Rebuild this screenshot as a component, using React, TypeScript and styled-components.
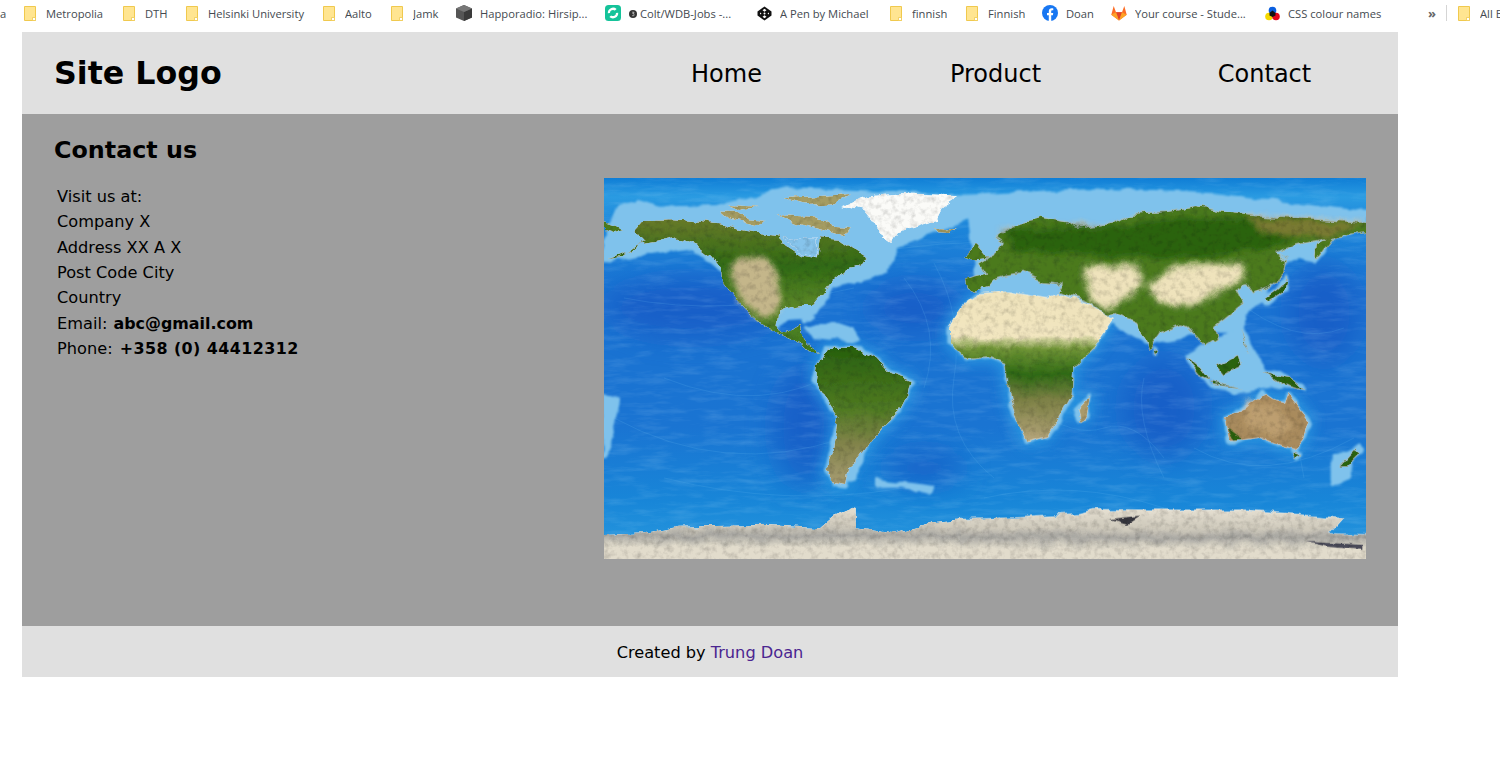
import React from "react";
import styled, { createGlobalStyle } from "styled-components";

const Global = createGlobalStyle`
  html, body { margin: 0; padding: 0; background: #fff; overflow: hidden; }
  body { font-family: "DejaVu Sans", Verdana, sans-serif; color: #000; }
`;

const BookmarkBar = styled.nav`
  height: 32px; display: flex; align-items: center; background: #fff; overflow: hidden;
  font-family: "Open Sans", "Noto Sans", sans-serif; font-size: 11.2px; color: #444a50; white-space: nowrap;
  padding-bottom: 6px; box-sizing: border-box;
`;
const Bookmark = styled.div<{ $left: number }>`
  display: flex; align-items: center; flex: none; margin-left: ${(p) => p.$left}px;
`;
const IconSlot = styled.span<{ $gap: number }>`
  display: flex; align-items: center; justify-content: center; flex: none; margin-right: ${(p) => p.$gap}px;
`;
const BookmarkLabel = styled.span<{ $w: number }>`
  display: block; flex: none; width: ${(p) => p.$w}px; overflow: hidden;
`;
const Chevrons = styled.span`
  flex: none; width: 9px; margin-left: 45px; font-size: 13px; font-weight: 700; color: #666; line-height: 1;
`;
const Separator = styled.span`
  flex: none; width: 1px; height: 16px; margin-left: 9px; background: #d5d5d5;
`;

const Page = styled.div`
  width: 1376px; margin-left: 22px;
`;
const Header = styled.header`
  height: 82px; background: #e0e0e0; display: grid; grid-template-columns: 538px repeat(3, 269px); align-items: center;
  padding: 2px 0 0 32px; box-sizing: border-box;
`;
const Logo = styled.div`
  font-size: 31.7px; font-weight: 700; margin-bottom: 2px;
`;
const NavLink = styled.a`
  font-size: 24px; text-align: center; color: #000;
`;
const Main = styled.main`
  height: 512px; background: #9e9e9e; box-sizing: border-box; padding: 19px 32px 0;
`;
const Heading = styled.h1`
  margin: 0; font-size: 23.8px; font-weight: 700; line-height: 34px;
`;
const Columns = styled.div`
  display: grid; grid-template-columns: 550px 762px; margin-top: 11px;
`;
const Address = styled.address`
  font-style: normal; font-size: 16.2px; line-height: 25.33px; padding: 6px 0 0 3px;
`;
const Value = styled.b<{ $spacing: number; $left: number }>`
  font-size: 15.9px; letter-spacing: ${(p) => p.$spacing}px; margin-left: ${(p) => p.$left}px;
`;
const MapSvg = styled.svg`
  display: block; width: 762px; height: 381px;
`;
const Footer = styled.footer`
  height: 51px; background: #e0e0e0; display: flex; align-items: center; justify-content: center; font-size: 16.2px;
  padding-top: 2px; box-sizing: border-box;
`;
const FooterLink = styled.a`
  color: #4b2590; margin-left: 5px;
`;

const Folder = () => (
  <svg width="12" height="15" viewBox="0 0 12 15">
    <path d="M.5.5h11v14H.5z" fill="#ffe591" stroke="#f0c94e" />
    <path d="M8.500 14.500v-3h3v3z" fill="#fff" stroke="#f0c94e" strokeWidth="0.8" />
  </svg>
);
const Cube = () => (
  <svg width="16" height="16" viewBox="0 0 16 16">
    <path d="M8 0l8 3.500v9L8 16 0 12.500v-9z" fill="#555" />
    <path d="M8 7l8-3.500v9L8 16z" fill="#3a3a3a" />
    <path d="M8 0l8 3.500L8 7 0 3.500z" fill="#777" />
  </svg>
);
const Swirl = () => (
  <svg width="16" height="16" viewBox="0 0 16 16">
    <rect width="16" height="16" rx="3.500" fill="#15c39a" />
    <path d="M2.800 8.300A5.300 5.300 0 0 1 11.600 4L9.900 5.600A3 3 0 0 0 5 8z" fill="#fff" />
    <path d="M13.200 7.700A5.300 5.300 0 0 1 4.400 12L6.100 10.400A3 3 0 0 0 11 8z" fill="#fff" />
  </svg>
);
const Pen = () => (
  <svg width="15" height="15" viewBox="0 0 15 15">
    <path d="M7.500.5l7 5v4l-7 5-7-5v-4z" fill="#111" />
    <path d="M7.500 2.800l2 1.400-2 1.500-2-1.500zM7.500 9.300l2 1.500-2 1.400-2-1.400zM3 6.500l1.500 1-1.500 1zM12 6.500l-1.500 1 1.500 1z" fill="#fff" />
    <circle cx="7.500" cy="7.500" r="1" fill="#fff" />
  </svg>
);
const Dot = () => (
  <svg width="8" height="8" viewBox="0 0 8 8">
    <circle cx="4" cy="4" r="4" fill="#333" />
    <path d="M3 2.200h2v.8H3.800v.7h1.200v2H3" fill="none" stroke="#ddd" strokeWidth="0.600" />
  </svg>
);
const Facebook = () => (
  <svg width="16" height="16" viewBox="0 0 16 16">
    <circle cx="8" cy="8" r="8" fill="#1877f2" />
    <path d="M6.800 16V10.300H5V8h1.800V6.300C6.800 4.400 8 3.300 9.700 3.300c.8 0 1.600.15 1.600.15v1.900h-.9c-.9 0-1.200.6-1.200 1.100V8h2l-.3 2.300H9.200V16z" fill="#fff" />
  </svg>
);
const GitLab = () => (
  <svg width="16" height="16" viewBox="0 0 16 16">
    <path d="M8 15.500L.3 9.700 2.700 1l2.300 6.300h6L13.300 1l2.400 8.700z" fill="#fc6d26" />
    <path d="M8 15.500L5 7.300h6z" fill="#e24329" />
    <path d="M.3 9.700L8 15.500 5 7.300z" fill="#fca326" />
    <path d="M15.700 9.700L8 15.500l3-8.200z" fill="#fca326" />
  </svg>
);
const Colours = () => (
  <svg width="15" height="15" viewBox="0 0 15 15">
    <circle cx="7.500" cy="4.500" r="3.800" fill="#0a5fe0" />
    <circle cx="4" cy="10.500" r="3.800" fill="#f5d800" />
    <circle cx="11" cy="10.500" r="3.800" fill="#e4061c" />
    <path d="M4.500 6.800l3-2.300 3 2.500 0 2.500L7.500 11l-3-1.500z" fill="#111" />
  </svg>
);

type Item = { left: number; icon: React.ReactNode; gap: number; label: React.ReactNode; w: number };
const bookmarks: Item[] = [
  { left: 18, icon: <Folder />, gap: 10, label: "Metropolia", w: 58 },
  { left: 19, icon: <Folder />, gap: 10, label: "DTH", w: 23 },
  { left: 18, icon: <Folder />, gap: 10, label: "Helsinki University", w: 97 },
  { left: 18, icon: <Folder />, gap: 10, label: "Aalto", w: 28 },
  { left: 18, icon: <Folder />, gap: 10, label: "Jamk", w: 27 },
  { left: 16, icon: <Cube />, gap: 8, label: "Happoradio: Hirsip...", w: 109 },
  { left: 16, icon: <Swirl />, gap: 8, label: <><Dot /> Colt/WDB-Jobs -...</>, w: 112 },
  { left: 16, icon: <Pen />, gap: 8, label: "A Pen by Michael", w: 91 },
  { left: 19, icon: <Folder />, gap: 10, label: "finnish", w: 35 },
  { left: 19, icon: <Folder />, gap: 10, label: "Finnish", w: 37 },
  { left: 17, icon: <Facebook />, gap: 8, label: "Doan", w: 28 },
  { left: 17, icon: <GitLab />, gap: 8, label: "Your course - Stude...", w: 112 },
  { left: 18, icon: <Colours />, gap: 8, label: "CSS colour names", w: 95 },
];

const ice = "#fbfbf8";
const green = "#4b7a1f";
const dark = "#2c6310";
const tan = "#a99a6a";
const sand = "#efe3bc";

const northAmerica = "M100 185L130 150L220 148L300 155L370 165L420 180L480 190L540 195L555 225L600 255L650 265L660 205L720 210L770 245L800 265L770 285L745 290L700 330L670 370L640 405L610 405L560 415L535 425L530 465L550 490L575 480L600 465L605 490L625 520L660 545L630 540L590 515L545 495L490 465L440 420L400 375L370 335L365 300L340 265L290 225L230 200L170 215L110 225L60 262L20 268L100 240L130 215Z";
const southAmerica = "M680 530L760 530L830 565L870 610L935 630L925 670L900 720L850 770L820 800L780 860L745 890L735 945L700 940L680 900L700 830L715 740L680 690L645 630L650 590Z";
const minorA = [
  "M12 160L70 180L40 190L12 180Z",
  "M1095 325L1180 320L1165 355L1120 365L1100 355Z",
  "M1090 260L1130 225L1165 265L1120 270Z",
];
const arctic = [
  "M360 125L410 125L440 145L500 150L470 165L390 150Z",
  "M530 135L640 140L700 170L750 175L720 195L650 175L590 160Z",
  "M385 105L480 110L420 120Z",
  "M550 85L750 72L700 100L620 105Z",
  "M1005 178L1070 178L1045 192L1015 190Z",
];
const greenland = "M730 105L800 80L900 70L1030 75L1075 80L1030 110L1010 150L950 170L890 190L875 215L840 190L815 150L790 120Z";
const antarcticaW = "M12 1095L130 1090L240 1070L500 1065L660 1075L700 1040L770 1010L770 1075L880 1090L1000 1060L1200 1040L1200 1300L-40 1300L-40 1100Z";

const eurasia = "M-40 325L20 310L0 280L50 250L70 220L50 205L100 165L180 145L270 160L290 175L400 160L450 130L560 125L650 110L730 125L850 140L1030 150L1200 160L1200 185L1060 205L1020 260L1005 265L1010 220L1040 205L950 225L890 250L920 270L915 310L870 350L820 370L800 340L770 360L790 400L740 440L700 470L710 510L680 530L640 490L620 470L600 465L540 490L505 540L470 460L400 430L380 440L330 400L240 365L250 340L190 335L130 310L70 320L20 335L0 350L-30 360Z";
const africa = "M-90 470L-50 410L0 370L80 365L200 385L235 370L300 420L395 450L340 530L280 590L275 680L235 750L200 800L140 815L110 750L90 690L75 580L30 560L-40 565L-90 520Z";
const australia = "M735 745L790 720L850 670L880 690L915 700L925 670L985 750L970 810L945 840L900 825L840 800L770 810L745 810Z";
const islands = [
  "M330 680L320 740L300 755L292 720Z",
  "M620 560L660 590L690 630L665 620Z",
  "M710 590L770 555L780 590L730 615Z",
  "M850 605L930 620L970 660L910 640Z",
  "M690 635L790 655L700 645Z",
  "M850 390L900 350L920 320L915 360L860 400Z",
  "M780 480L800 540L810 550L790 520Z",
  "M1130 830L1145 845L1100 890L1075 890Z",
  "M520 535L532 545L525 558Z",
  "M935 845L960 850L945 870Z",
];
const antarcticaE = "M-60 1045L100 1040L300 1030L340 1018L600 1020L800 1020L1090 1045L1050 1090L1200 1095L1200 1300L-60 1300Z";
const shelvesA = [
  "M350 110L560 60L1120 80L1110 140L1040 170L890 225L860 300L820 320L700 350L650 420L610 450L640 440L560 445L530 470L480 440L360 300L280 230L130 250L12 270L12 220L60 110L110 95L180 115Z",
  "M740 800L800 820L770 920L720 935Z",
  "M12 680L55 690L30 800L12 860Z",
  "M620 470L760 470L770 510L640 500Z",
];
const shelvesB = [
  "M-40 80L320 60L700 75L1158 125L1158 165L1060 205L1010 270L960 260L900 290L860 370L800 430L780 480L700 480L500 520L380 440L200 380L0 370Z",
  "M620 560L780 470L850 600L940 640L760 670Z",
  "M1060 850L1130 850L1100 930L1060 940Z",
];
const ridges = [
  "M30 60Q150 90 300 70T560 100", "M20 120Q120 140 250 110", "M60 200Q160 240 240 190", "M10 240Q120 300 240 260",
  "M60 300Q180 330 300 310", "M330 85Q360 140 350 200T390 300", "M300 100Q340 150 320 210",
  "M430 230Q470 260 500 250T560 280", "M540 200Q530 240 560 300", "M630 120Q690 170 740 150", "M590 270Q660 310 750 260",
  "M640 200Q690 230 700 300", "M380 320Q470 300 560 330",
];

const A = "translate(-4 -8) scale(0.3333)";
const B = "translate(376 -8) scale(0.3333)";

const WorldMap = () => (
  <MapSvg viewBox="0 0 762 381" role="img" aria-label="World map">
    <defs>
      <linearGradient id="ocean" x1="0" y1="0" x2="0" y2="1">
        <stop offset="0" stopColor="#0f7ed6" />
        <stop offset="0.05" stopColor="#2a9be2" />
        <stop offset="0.12" stopColor="#1c86da" />
        <stop offset="0.3" stopColor="#1a72d2" />
        <stop offset="0.65" stopColor="#1a74d2" />
        <stop offset="0.85" stopColor="#1886d8" />
        <stop offset="1" stopColor="#2a9ade" />
      </linearGradient>
      <linearGradient id="southAm" x1="0" y1="0" x2="0" y2="1">
        <stop offset="0" stopColor="#27600e" />
        <stop offset="0.45" stopColor="#4f7a22" />
        <stop offset="0.7" stopColor="#81834a" />
        <stop offset="1" stopColor="#a79c72" />
      </linearGradient>
      <linearGradient id="northAm" x1="0" y1="0" x2="0" y2="1">
        <stop offset="0" stopColor="#687a2a" />
        <stop offset="0.35" stopColor="#2f6a12" />
        <stop offset="0.65" stopColor="#5a8628" />
        <stop offset="1" stopColor="#3f7a1c" />
      </linearGradient>
      <linearGradient id="africaFill" x1="0" y1="0" x2="0" y2="1">
        <stop offset="0" stopColor="#f0e4bc" />
        <stop offset="0.3" stopColor="#f2e6c0" />
        <stop offset="0.38" stopColor="#6f9436" />
        <stop offset="0.55" stopColor="#2f6a14" />
        <stop offset="0.72" stopColor="#7b8044" />
        <stop offset="1" stopColor="#b7a67c" />
      </linearGradient>
      <linearGradient id="ant" x1="0" y1="0" x2="0" y2="1">
        <stop offset="0" stopColor="#e6e0d2" />
        <stop offset="0.2" stopColor="#cfcabc" />
        <stop offset="0.3" stopColor="#a9a8a3" />
        <stop offset="0.42" stopColor="#e2dccc" />
        <stop offset="1" stopColor="#e2dccc" />
      </linearGradient>
      <filter id="land" x="-5%" y="-5%" width="110%" height="110%">
        <feTurbulence type="fractalNoise" baseFrequency="0.06" numOctaves="4" seed="4" result="warp" />
        <feDisplacementMap in="SourceGraphic" in2="warp" scale="9" xChannelSelector="R" yChannelSelector="G" result="moved" />
        <feTurbulence type="fractalNoise" baseFrequency="0.16" numOctaves="3" seed="12" />
        <feColorMatrix values="0.700 0 0 0 0.600  0.700 0 0 0 0.600  0.700 0 0 0 0.600  0 0 0 0 1" result="mottle" />
        <feComposite in="mottle" in2="moved" operator="in" result="clipped" />
        <feBlend in="moved" in2="clipped" mode="multiply" />
      </filter>
      <filter id="shelf" x="-5%" y="-5%" width="110%" height="110%">
        <feTurbulence type="fractalNoise" baseFrequency="0.05" numOctaves="3" seed="7" result="warp" />
        <feDisplacementMap in="SourceGraphic" in2="warp" scale="9" xChannelSelector="R" yChannelSelector="G" />
        <feGaussianBlur stdDeviation="1.200" />
      </filter>
      <filter id="wide" x="-10%" y="-10%" width="120%" height="120%">
        <feGaussianBlur stdDeviation="7" />
      </filter>
      <filter id="soft" x="-10%" y="-10%" width="120%" height="120%">
        <feGaussianBlur stdDeviation="14" />
      </filter>
      <filter id="patch" x="-30%" y="-30%" width="160%" height="160%">
        <feGaussianBlur stdDeviation="9" />
      </filter>
      <filter id="grain" x="0" y="0" width="100%" height="100%">
        <feTurbulence type="fractalNoise" baseFrequency="0.03 0.16" numOctaves="4" seed="9" />
        <feColorMatrix values="0 0 0 0 0.7  0 0 0 0 0.9  0 0 0 0 1  1.800 0 0 0 -0.800" />
      </filter>
    </defs>

    <rect width="762" height="381" fill="url(#ocean)" />
    <g fill="#1650c0" opacity="0.55" filter="url(#soft)">
      <ellipse cx="90" cy="130" rx="90" ry="30" />
      <ellipse cx="200" cy="250" rx="30" ry="60" />
      <ellipse cx="310" cy="130" rx="45" ry="25" />
      <ellipse cx="320" cy="290" rx="40" ry="18" />
      <ellipse cx="720" cy="135" rx="35" ry="50" />
      <ellipse cx="560" cy="230" rx="40" ry="50" />
    </g>
    <rect width="762" height="381" filter="url(#grain)" opacity="0.16" />
    <g fill="none" stroke="#6cbdf0" strokeWidth="0.8" opacity="0.22">
      {ridges.map((d) => <path key={d} d={d} />)}
    </g>

    <g filter="url(#wide)" fill="#2fa0e4" stroke="#2fa0e4" strokeWidth="30" strokeLinejoin="round" opacity="0.8">
      <path transform={A} d={southAmerica} />
      <g transform={B}>
        <path d={africa} />
        <path d={australia} />
        <path d={islands[0]} />
      </g>
    </g>
    <g filter="url(#shelf)">
      <g fill="#7fc2ec" stroke="#7fc2ec" strokeLinejoin="round">
        <g transform={A} strokeWidth="10">
          <path d={southAmerica} />
          {shelvesA.map((d) => <path key={d} d={d} />)}
          <path d="M830 932L1000 952L985 970L900 945L830 945Z" />
        </g>
        <g transform={B} strokeWidth="10">
          {shelvesB.map((d) => <path key={d} d={d} />)}
          <path d={africa} />
          <path d={australia} />
          {islands.map((d) => <path key={d} d={d} />)}
        </g>
      </g>
    </g>
    <g filter="url(#land)">
      <g transform={A}>
        <path d={northAmerica} fill="url(#northAm)" />
        <path d={southAmerica} fill="url(#southAm)" />
        {minorA.map((d) => <path key={d} d={d} fill={green} />)}
        {arctic.map((d) => <path key={d} d={d} fill="#a59c62" />)}
        <path d="M555 205L650 205L650 262L600 250Z" fill="#86c4ec" />
        <path d="M385 290L430 255L515 275L535 340L535 410L510 445L480 440L420 385Z" fill="#c4b68a" filter="url(#patch)" />
        <path d={greenland} fill={ice} />
        <path d={antarcticaW} fill="url(#ant)" />
      </g>
      <g transform={B}>
        <path d={eurasia} fill={green} />
        <path d="M60 180L270 170L400 170L600 140L1000 160L900 230L700 260L400 260L100 240Z" fill={dark} filter="url(#patch)" />
        <path d="M800 140L1160 160L1050 200L850 190Z" fill="#7a7a32" filter="url(#patch)" />
        <path d={africa} fill="url(#africaFill)" />
        <path d="M240 370L330 405L385 445L300 510L240 430Z" fill={sand} />
        <path d="M310 290L470 280L490 350L380 420L330 390Z" fill={sand} filter="url(#patch)" />
        <path d="M500 350L590 285L780 280L800 320L640 410L540 400Z" fill={sand} filter="url(#patch)" />
        <path d={australia} fill="#a98b5d" />
        <path d="M800 700L880 710L950 770L900 800L800 770Z" fill="#bd9f70" filter="url(#patch)" />
        <path d="M740 770L760 810L790 808Z" fill={dark} />
        {islands.map((d, i) => <path key={d} d={d} fill={i === 0 ? tan : dark} />)}
        <path d={antarcticaE} fill="url(#ant)" />
        <path d="M390 1050L480 1040L440 1065Z" fill="#34343c" />
        <path d="M980 1115L1150 1125L1150 1140L1040 1130Z" fill="#4a4a58" />
      </g>
    </g>
  </MapSvg>
);

export default function App() {
  return (
    <>
      <Global />
      <BookmarkBar>
        <BookmarkLabel $w={6}>a</BookmarkLabel>
        {bookmarks.map((b, i) => (
          <Bookmark key={i} $left={b.left}>
            <IconSlot $gap={b.gap}>{b.icon}</IconSlot>
            <BookmarkLabel $w={b.w}>{b.label}</BookmarkLabel>
          </Bookmark>
        ))}
        <Chevrons>»</Chevrons>
        <Separator />
        <Bookmark $left={11}>
          <IconSlot $gap={10}><Folder /></IconSlot>
          <BookmarkLabel $w={20}>All Bookmarks</BookmarkLabel>
        </Bookmark>
      </BookmarkBar>
      <Page>
        <Header>
          <Logo>Site Logo</Logo>
          <NavLink>Home</NavLink>
          <NavLink>Product</NavLink>
          <NavLink>Contact</NavLink>
        </Header>
        <Main>
          <Heading>Contact us</Heading>
          <Columns>
            <Address>
              Visit us at:<br />
              Company X<br />
              Address XX A X<br />
              Post Code City<br />
              Country<br />
              Email: <Value $spacing={0} $left={1}>abc@gmail.com</Value><br />
              Phone: <Value $spacing={0.43} $left={2}>+358 (0) 44412312</Value>
            </Address>
            <WorldMap />
          </Columns>
        </Main>
        <Footer>
          Created by<FooterLink>Trung Doan</FooterLink>
        </Footer>
      </Page>
    </>
  );
}
